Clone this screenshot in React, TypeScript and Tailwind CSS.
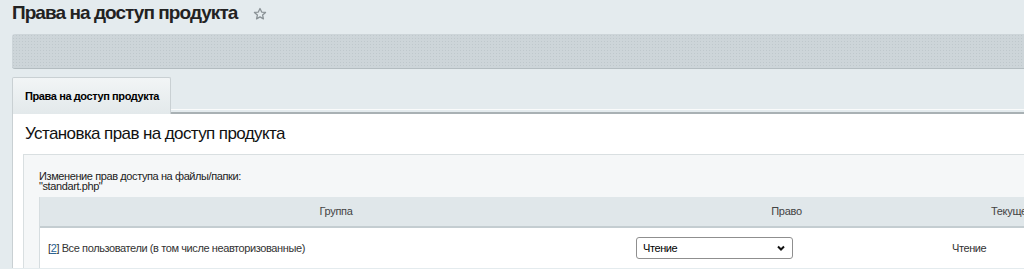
import React from "react";

export default function App() {
  return (
    <div className="h-[269px] w-[1024px] overflow-hidden bg-[#e4ebee] pl-[12px]" style={{ fontFamily: '"Liberation Sans", Arial, sans-serif' }}>
      <div className="flex h-[26px] items-center">
        <h1 className="text-[19px] font-bold leading-[24px] tracking-[-0.95px] text-[#222]">Права на доступ продукта</h1>
        <svg className="ml-[16px] mt-[2px]" width="14" height="14" viewBox="0 0 24 24" fill="none" stroke="#8a9296" strokeWidth="2.2" strokeLinejoin="round">
          <polygon points="12,2.5 14.9,8.6 21.5,9.3 16.5,13.8 17.9,20.4 12,17 6.1,20.4 7.5,13.8 2.5,9.3 9.1,8.6" />
        </svg>
      </div>
      <div className="mt-[8px] h-[35px] rounded-l-[3px] border-b border-[#b3bcc0] bg-[#cdd5d9] bg-[radial-gradient(#bfc8cc_0.6px,transparent_0.7px)] bg-[length:3px_3px]" />
      <div className="mt-[8px] flex h-[37px]">
        <div className="flex w-[159px] items-center rounded-t-[2px] border border-b-0 border-[#c9d0d3] bg-gradient-to-b from-[#f2f5f6] to-[#e3e9eb] pl-[12px] text-[11px] font-bold tracking-[-0.4px] text-[#000]">
          Права на доступ продукта
        </div>
        <div className="flex flex-1 flex-col justify-end">
          <div className="h-[5px] border-t border-[#fafbfb] border-b-2 border-b-[#a9b1b4]" />
        </div>
      </div>
      <div className="border-l border-[#c9d0d3] bg-white">
        <div className="flex h-[40px] items-center pl-[12px] text-[17px] tracking-[-0.6px] text-[#111]">Установка прав на доступ продукта</div>
        <div className="ml-[10px] border-l border-t border-[#d9dfe1] bg-[#f5f7f8] pl-[15px] pt-[16px]">
          <div className="text-[11px] leading-[10px] tracking-[-0.4px] text-[#222]">
            Изменение прав доступа на файлы/папки:
            <br />
            "standart.php"
          </div>
          <div className="mt-[6px] overflow-hidden border-l border-[#d6dde0]">
            <div className="flex h-[31px] items-center border-b-2 border-[#c4cdd1] bg-[#e0e7ea] text-[11px] tracking-[-0.3px] text-[#444]">
              <div className="w-[592px] shrink-0 text-center">Группа</div>
              <div className="w-[309px] shrink-0 text-center">Право</div>
              <div className="shrink-0 whitespace-nowrap pl-[50px]">Текущее</div>
            </div>
            <div className="flex h-[40px] items-center bg-white text-[11px] tracking-[-0.4px] text-[#333]">
              <div className="w-[592px] shrink-0 pl-[8px]">
                [<span className="text-[#2a6496] underline">2</span>] Все пользователи (в том числе неавторизованные)
              </div>
              <div className="w-[309px] shrink-0 pl-[4px]">
                <div className="flex h-[22px] w-[157px] items-center justify-between rounded-[3px] border border-[#8f8f8f] bg-white pl-[6px] pr-[6px] text-[11px] text-[#000]">
                  <span>Чтение</span>
                  <svg width="10" height="10" viewBox="0 0 10 10" fill="none" stroke="#111" strokeWidth="2"><path d="M2 3.5 L5 6.5 L8 3.5" /></svg>
                </div>
              </div>
              <div className="shrink-0 pl-[11px]">Чтение</div>
            </div>
          </div>
        </div>
      </div>
    </div>
  );
}
